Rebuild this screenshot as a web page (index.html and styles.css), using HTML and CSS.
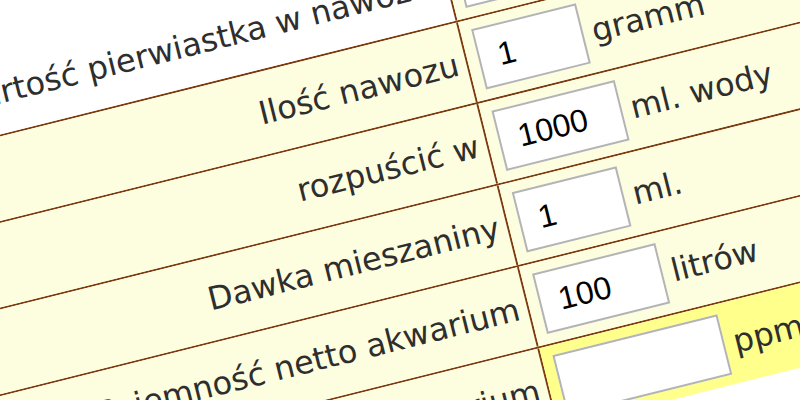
FILE: index.html
```html
<!DOCTYPE html>
<html lang="pl">
<head>
  <meta charset="UTF-8" />
  <meta name="viewport" content="width=device-width, initial-scale=1.0" />
  <title>Kalkulator nawozu</title>
  <link rel="stylesheet" href="styles.css">
</head>
<body>
  <!-- tabela kalkulatora: etykieta po lewej, pole i jednostka po prawej -->
  <div class="kalkulator">
    <div class="wiersz wiersz-pierwszy">
      <div class="etykieta etykieta-biala">Zawartość pierwiastka w nawozie</div>
      <div class="wartosc">
        <input class="pole pole-male" type="text" value="10">
        <span class="jednostka">%</span>
      </div>
    </div>

    <div class="wiersz">
      <div class="etykieta">Ilość nawozu</div>
      <div class="wartosc">
        <input class="pole pole-male" type="text" value="1">
        <span class="jednostka">gramm</span>
      </div>
    </div>

    <div class="wiersz">
      <div class="etykieta">rozpuścić w</div>
      <div class="wartosc">
        <input class="pole pole-sredni" type="text" value="1000">
        <span class="jednostka">ml. wody</span>
      </div>
    </div>

    <div class="wiersz">
      <div class="etykieta">Dawka mieszaniny</div>
      <div class="wartosc">
        <input class="pole pole-male" type="text" value="1">
        <span class="jednostka">ml.</span>
      </div>
    </div>

    <div class="wiersz">
      <div class="etykieta">Pojemność netto akwarium</div>
      <div class="wartosc">
        <input class="pole pole-sredni" type="text" value="100">
        <span class="jednostka">litrów</span>
      </div>
    </div>

    <!-- wynik -->
    <div class="wiersz">
      <div class="etykieta">Stężenie w akwarium</div>
      <div class="wartosc wartosc-wynik">
        <input class="pole pole-szerokie" type="text" readonly>
        <span class="jednostka">ppm</span>
      </div>
    </div>
  </div>
</body>
</html>
```

FILE: styles.css
```css
html,
body {
  margin: 0;
  padding: 0;
  background-color: #fff;
  overflow: hidden;
}

/* cala tabela jest obrocona */
.kalkulator {
  width: 1020px;
  margin: 84px 0 0 -145px;
  transform-origin: 0 0;
  transform: rotate(-14deg);
  font-family: "DejaVu Sans", sans-serif;
  font-size: 32px;
  color: #2e2e2e;
}

.wiersz {
  display: flex;
  height: 84px;
  box-sizing: border-box;
  border-top: 2px solid #7d3c0e;
}

.wiersz-pierwszy {
  border-top-color: transparent;
}

.etykieta {
  width: 600px;
  box-sizing: border-box;
  border-right: 2px solid #7d3c0e;
  background-color: #fdfde0;
  display: flex;
  align-items: center;
  justify-content: flex-end;
  padding-right: 8px;
  white-space: nowrap;
}

.etykieta-biala {
  background-color: #fff;
}

.wartosc {
  flex: 1;
  display: flex;
  align-items: center;
  padding-left: 11px;
  background-color: #fdfde0;
}

.wartosc-wynik {
  background-color: #ffff8c;
}

.pole {
  font-family: "Liberation Sans", Arial, sans-serif;
  font-size: 32px;
  color: #000;
  height: 62px;
  box-sizing: border-box;
  border: 2px solid #b4b4b4;
  padding: 0 0 0 18px;
  background-color: #fff;
  outline: none;
}

.pole-male {
  width: 108px;
}

.pole-sredni {
  width: 127px;
}

.pole-szerokie {
  width: 170px;
}

.jednostka {
  margin-left: 9px;
  white-space: nowrap;
}
```
